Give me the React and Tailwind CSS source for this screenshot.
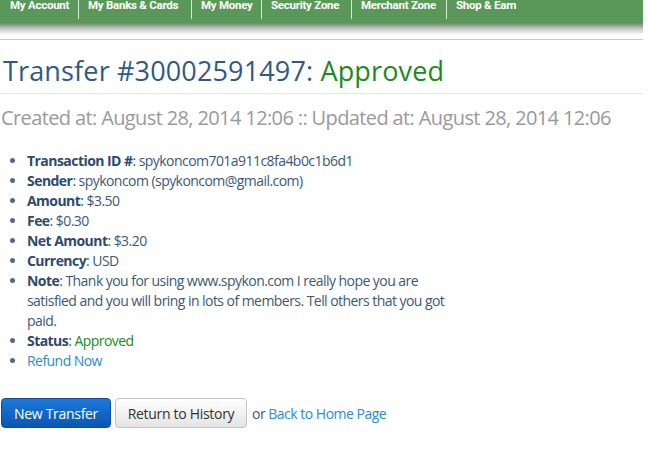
import React from 'react';

const navItems = [
  { label: 'My Account', w: 'w-[78px] pl-[10px]' },
  { label: 'My Banks & Cards', w: 'w-[113px] pl-[9px]' },
  { label: 'My Money', w: 'w-[70px] pl-[9px]' },
  { label: 'Security Zone', w: 'w-[90px] pl-[9px]' },
  { label: 'Merchant Zone', w: 'w-[95px] pl-[9px]' },
  { label: 'Shop & Earn', w: 'flex-1 pl-[9px]' },
];

const details = [
  { label: 'Transaction ID #', value: 'spykoncom701a911c8fa4b0c1b6d1' },
  { label: 'Sender', value: 'spykoncom (spykoncom@gmail.com)' },
  { label: 'Amount', value: '$3.50' },
  { label: 'Fee', value: '$0.30' },
  { label: 'Net Amount', value: '$3.20' },
  { label: 'Currency', value: 'USD' },
];

export default function App() {
  return (
    <div className="w-[650px] h-[450px] bg-white overflow-hidden font-['Open_Sans',sans-serif]">
      {/* top nav */}
      <div className="w-[643px]">
        <div className="h-[23px] bg-[#5a985a] flex items-start overflow-hidden whitespace-nowrap font-['Roboto',sans-serif] font-bold text-[11.5px] text-white leading-[13px] tracking-[-0.25px]">
          {navItems.map((item, i) => (
            <div key={item.label} className={`h-[19px] flex items-start ${item.w} ${i > 0 ? 'border-l border-[#d6e6d6]' : ''}`}>
              <span className="-mt-[1px]">{item.label}</span>
            </div>
          ))}
        </div>
        <div className="h-[12px] bg-gradient-to-b from-[#6f8a6f] via-[#c8c8c8] to-white"></div>
      </div>
      <div className="w-[643px] h-[1px] bg-[#c9c9c9] mt-[4px]"></div>

      {/* title */}
      <h1 className="mt-[14px] ml-[3px] text-[27px] leading-[34px] text-[#2d5a87] tracking-[0.15px]">
        Transfer #30002591497: <span className="text-[#1c8a1c]">Approved</span>
      </h1>
      <div className="w-[643px] h-[1px] bg-[#e6e6e6] mt-[5px]"></div>

      <div className="mt-[11px] ml-[1px] text-[20px] leading-[26px] text-[#9a9a9a] tracking-[-0.62px]">
        Created at: August 28, 2014 12:06 :: Updated at: August 28, 2014 12:06
      </div>

      {/* detail list */}
      <ul className="mt-[20px] ml-[27px] list-disc text-[14px] leading-[20px] text-[#3b5878] tracking-[-0.55px] marker:text-[#4d6a8a]">
        {details.map((d) => (
          <li key={d.label}>
            <span className="font-bold text-[#2c4a6e]">{d.label}</span>: {d.value}
          </li>
        ))}
        <li className="w-[440px]">
          <span className="font-bold text-[#2c4a6e]">Note</span>: Thank you for using www.spykon.com I really hope you are satisfied and you will bring in lots of members. Tell others that you got paid.
        </li>
        <li>
          <span className="font-bold text-[#2c4a6e]">Status</span>: <span className="text-[#1c8a1c]">Approved</span>
        </li>
        <li>
          <a className="text-[#2b8bd1]">Refund Now</a>
        </li>
      </ul>

      {/* actions */}
      <div className="mt-[27px] ml-[1px] flex items-center gap-[4px] text-[14px]">
        <button className="h-[30px] w-[110px] rounded-[4px] bg-gradient-to-b from-[#1b78d8] to-[#0c56b4] border border-[#0b4e9e] text-white tracking-[-0.3px]">
          New Transfer
        </button>
        <button className="h-[30px] w-[132px] rounded-[4px] bg-gradient-to-b from-[#ffffff] to-[#e4e4e4] border border-[#c4c4c4] text-[#333333] tracking-[-0.3px]">
          Return to History
        </button>
        <span className="ml-[1px] text-[#3b5878] tracking-[-0.5px]">
          or <a className="text-[#2b8bd1]">Back to Home Page</a>
        </span>
      </div>
    </div>
  );
}
